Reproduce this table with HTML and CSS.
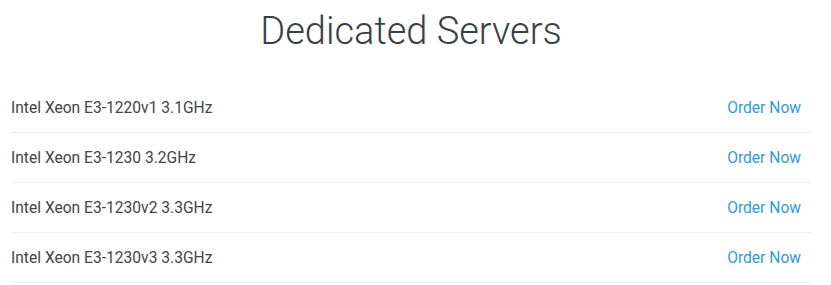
FILE: index.html
```html
<!DOCTYPE html>
<html>
<head>
<meta charset="utf-8">
<link rel="stylesheet" href="styles.css">
</head>
<body>
<div class="wrap">
  <h1 class="title">Dedicated Servers</h1>
  <ul class="list">
    <li class="row"><span class="name">Intel Xeon E3-1220v1 3.1GHz</span><a class="order" href="#">Order Now</a></li>
    <li class="row"><span class="name">Intel Xeon E3-1230 3.2GHz</span><a class="order" href="#">Order Now</a></li>
    <li class="row"><span class="name">Intel Xeon E3-1230v2 3.3GHz</span><a class="order" href="#">Order Now</a></li>
    <li class="row"><span class="name">Intel Xeon E3-1230v3 3.3GHz</span><a class="order" href="#">Order Now</a></li>
  </ul>
</div>
</body>
</html>
```
FILE: styles.css
```css
html, body {
  margin: 0;
  padding: 0;
  background: #ffffff;
}
body {
  font-family: Roboto, "Open Sans", sans-serif;
  color: #444444;
}
.wrap {
  padding: 0 20px 0 11px;
}
.title {
  margin: 0;
  padding-top: 8px;
  height: 83px;
  box-sizing: border-box;
  text-align: center;
  font-weight: 300;
  font-size: 38px;
  line-height: 46px;
  color: #3a3f44;
}
.list {
  list-style: none;
  margin: 0;
  padding: 0;
}
.row {
  display: flex;
  justify-content: space-between;
  align-items: center;
  height: 50px;
  box-sizing: border-box;
  border-bottom: 1px solid #eeeeee;
  padding: 1px 10px 0 0;
  font-size: 15.6px;
}
.name {
  color: #444444;
}
.order {
  color: #3399dd;
  text-decoration: none;
}
```
